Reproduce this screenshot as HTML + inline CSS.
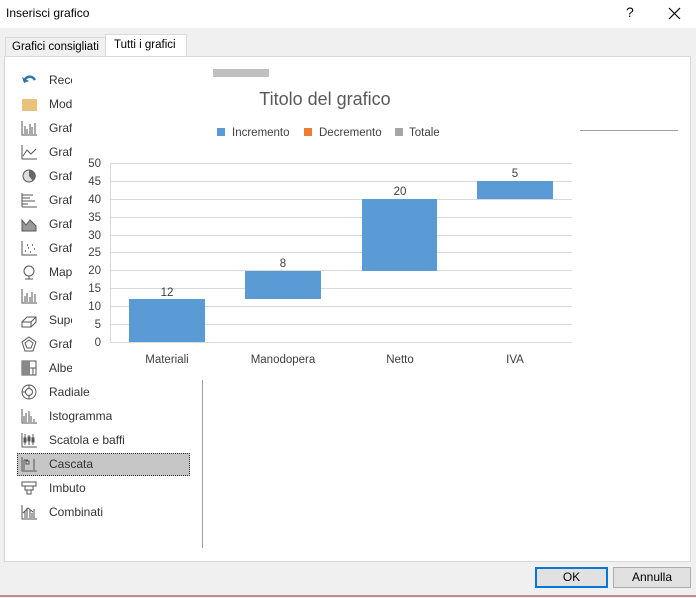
<!DOCTYPE html>
<html><head><meta charset="utf-8"><style>
*{margin:0;padding:0;box-sizing:border-box}
body{width:696px;height:598px;background:#f0f0f0;font-family:"Liberation Sans",sans-serif;font-size:12px;color:#000;position:relative;overflow:hidden}
.abs{position:absolute}
.item{position:absolute;left:18px;height:22px;width:172px;font-size:12px;color:#333}
.item .ic{position:absolute;left:3px;top:3px;width:16px;height:16px}
.item .t{position:absolute;left:31px;top:4px;white-space:nowrap;overflow:hidden}
</style></head><body>
<div class="abs" style="left:0;top:0;width:696px;height:28px;background:#fff"></div>
<div class="abs" style="left:6px;top:6px;font-size:12px">Inserisci grafico</div>
<div class="abs" style="left:626px;top:4px;font-size:14px">?</div>
<svg class="abs" style="left:668px;top:7px" width="13" height="13"><path d="M1 1L12 12M12 1L1 12" stroke="#000" stroke-width="1.2"/></svg>
<div class="abs" style="left:5px;top:37px;width:101px;height:20px;border:1px solid #d9d9d9;background:#f0f0f0;font-size:11.5px;padding:3px 0 0 6px">Grafici consigliati</div>
<div class="abs" style="left:105px;top:34px;width:82px;height:23px;border:1px solid #d9d9d9;border-bottom:none;background:#fff;font-size:11.5px;padding:4px 0 0 8px">Tutti i grafici</div>
<div class="abs" style="left:4px;top:56px;width:687px;height:506px;background:#fff;border:1px solid #d9d9d9"></div>
<div class="abs" style="left:202px;top:380px;width:1px;height:168px;background:#a0a0a0"></div>
<div class="abs" style="left:580px;top:130px;width:98px;height:1px;background:#a0a0a0"></div>

<div class="item" style="top:69px"><svg class="ic" viewBox="0 0 16 16"><path d="M3 9C5 4 11 3 14 8" fill="none" stroke="#2e75b6" stroke-width="2.5"/><path d="M1 5L3 11L8 9Z" fill="#2e75b6"/></svg><span class="t">Recenti</span></div>
<div class="item" style="top:93px"><svg class="ic" viewBox="0 0 16 16"><rect x="1" y="3" width="15" height="12" fill="#e8c27a"/></svg><span class="t">Modelli</span></div>
<div class="item" style="top:117px"><svg class="ic" viewBox="0 0 16 16" fill="none" stroke="#555"><path d="M1 1V15H16M4 14V6M6 14V9M9 14V4M11 14V7M14 14V3"/></svg><span class="t">Grafico</span></div>
<div class="item" style="top:141px"><svg class="ic" viewBox="0 0 16 16" fill="none" stroke="#555"><path d="M1 1V15H16M2 12L6 6L10 10L15 5"/></svg><span class="t">Grafico</span></div>
<div class="item" style="top:165px"><svg class="ic" viewBox="0 0 16 16"><circle cx="8" cy="8" r="6" fill="#ddd" stroke="#555"/><path d="M8 8V2A6 6 0 0 1 12 13Z" fill="#666"/></svg><span class="t">Grafico</span></div>
<div class="item" style="top:189px"><svg class="ic" viewBox="0 0 16 16" fill="none" stroke="#555"><path d="M1 1V15M1 3H12M1 6H9M1 9H14M1 12H7M1 15H16"/></svg><span class="t">Grafico</span></div>
<div class="item" style="top:213px"><svg class="ic" viewBox="0 0 16 16"><path d="M1 15L1 4L5 9L9 4L15 10V15Z" fill="#999" stroke="#555"/></svg><span class="t">Grafico</span></div>
<div class="item" style="top:237px"><svg class="ic" viewBox="0 0 16 16" fill="none" stroke="#555"><path d="M1 1V15H16"/><path d="M4 11h1M7 8h1M9 12h1M11 5h1M13 9h1M6 5h1" stroke-width="1.5"/></svg><span class="t">Grafico</span></div>
<div class="item" style="top:261px"><svg class="ic" viewBox="0 0 16 16" fill="none" stroke="#555"><circle cx="8" cy="7" r="5"/><path d="M8 12V15M4 15H12"/></svg><span class="t">Mappa</span></div>
<div class="item" style="top:285px"><svg class="ic" viewBox="0 0 16 16" fill="none" stroke="#555"><path d="M1 1V15H16M4 14V8M6 14V5M9 14V9M11 14V4M14 14V6"/></svg><span class="t">Grafico</span></div>
<div class="item" style="top:309px"><svg class="ic" viewBox="0 0 16 16" fill="none" stroke="#555"><path d="M1 10L6 5H15V10L10 15H1Z M1 10H10V15M10 10L15 5"/></svg><span class="t">Superficie</span></div>
<div class="item" style="top:333px"><svg class="ic" viewBox="0 0 16 16" fill="none" stroke="#555"><path d="M8 1L15 6L12 15H4L1 6Z M8 4L12 7L10 12H6L4 7Z"/></svg><span class="t">Grafico</span></div>
<div class="item" style="top:357px"><svg class="ic" viewBox="0 0 16 16"><rect x="1" y="1" width="14" height="14" fill="#fff" stroke="#555"/><rect x="1" y="1" width="8" height="14" fill="#888"/><path d="M9 8H15M12 8V15" stroke="#555"/></svg><span class="t">Albero</span></div>
<div class="item" style="top:381px"><svg class="ic" viewBox="0 0 16 16" fill="none" stroke="#555"><circle cx="8" cy="8" r="7"/><circle cx="8" cy="8" r="3.5"/><path d="M8 1V4.5M8 11.5V15M1 8H4.5"/></svg><span class="t">Radiale</span></div>
<div class="item" style="top:405px"><svg class="ic" viewBox="0 0 16 16" fill="none" stroke="#555"><path d="M1 1V15H16M3 14V8M5 14V5M8 14V3M10 14V8M13 14V11"/></svg><span class="t">Istogramma</span></div>
<div class="item" style="top:429px"><svg class="ic" viewBox="0 0 16 16" fill="none" stroke="#555"><path d="M1 1V15H16M4 2V13M3 6H5V10H3ZM8 3V13M7 5H9V9H7ZM12 2V13M11 6H13V10H11Z"/></svg><span class="t">Scatola e baffi</span></div>
<div class="abs" style="left:17px;top:453px;width:173px;height:23px;background:#c6c6c6;border:1px dotted #333"></div>
<div class="item" style="top:453px"><svg class="ic" viewBox="0 0 16 16" fill="none" stroke="#555"><path d="M1 1V15H16M3 14V4M3 4H7M5 5H8V8H5Z M13 3V14"/></svg><span class="t">Cascata</span></div>
<div class="item" style="top:477px"><svg class="ic" viewBox="0 0 16 16" fill="none" stroke="#555"><path d="M1 2H15V6H1ZM4 6H12V10H4ZM6 10H10V14H6Z"/></svg><span class="t">Imbuto</span></div>
<div class="item" style="top:501px"><svg class="ic" viewBox="0 0 16 16" fill="none" stroke="#555"><path d="M1 1V15H16M4 14V7M6 14V4M9 14V6M11 14V9M13 14V5M2 9L7 4L12 8"/></svg><span class="t">Combinati</span></div>

<svg class="abs" style="left:0;top:0" width="696" height="598">
<rect x="72" y="62" width="508" height="316" fill="#fff"/>
<rect x="213" y="69" width="56" height="8" fill="#c0c0c0"/>
<text x="325" y="105" text-anchor="middle" font-size="18" fill="#595959" font-family="Liberation Sans">Titolo del grafico</text>
<rect x="217" y="128" width="8" height="8" fill="#5b9bd5"/><text x="232" y="136" font-size="11.5" fill="#404040">Incremento</text>
<rect x="304" y="128" width="8" height="8" fill="#ed7d31"/><text x="319" y="136" font-size="11.5" fill="#404040">Decremento</text>
<rect x="395" y="128" width="8" height="8" fill="#a5a5a5"/><text x="409" y="136" font-size="11.5" fill="#404040">Totale</text>
<g stroke="#d9d9d9" stroke-width="1">
<path d="M110 163.5H572M110 181.5H572M110 199.5H572M110 217.5H572M110 235.5H572M110 252.5H572M110 270.5H572M110 288.5H572M110 306.5H572M110 324.5H572M110 342.5H572M110.5 163V342"/>
</g>
<g font-size="11.5" fill="#404040" text-anchor="end">
<text x="101" y="167">50</text><text x="101" y="185">45</text><text x="101" y="203">40</text><text x="101" y="221">35</text><text x="101" y="239">30</text><text x="101" y="256">25</text><text x="101" y="274">20</text><text x="101" y="292">15</text><text x="101" y="310">10</text><text x="101" y="328">5</text><text x="101" y="346">0</text>
</g>
<g fill="#5b9bd5">
<rect x="129" y="299" width="76" height="43"/>
<rect x="245" y="271" width="76" height="28"/>
<rect x="362" y="199" width="75" height="72"/>
<rect x="477" y="181" width="76" height="18"/>
</g>
<g font-size="11.5" fill="#404040" text-anchor="middle">
<text x="167" y="296">12</text><text x="283" y="267">8</text><text x="400" y="195">20</text><text x="515" y="177">5</text>
<text x="167" y="363">Materiali</text><text x="283" y="363">Manodopera</text><text x="400" y="363">Netto</text><text x="515" y="363">IVA</text>
</g>
</svg>

<div class="abs" style="left:535px;top:567px;width:73px;height:21px;border:2px solid #0078d7;background:#e1e1e1;text-align:center;line-height:17px;font-size:12px">OK</div>
<div class="abs" style="left:613px;top:567px;width:78px;height:21px;border:1px solid #adadad;background:#e1e1e1;text-align:center;line-height:19px;font-size:12px">Annulla</div>
<div class="abs" style="left:0;top:595px;width:696px;height:2px;background:#c88a8a"></div>
</body></html>
